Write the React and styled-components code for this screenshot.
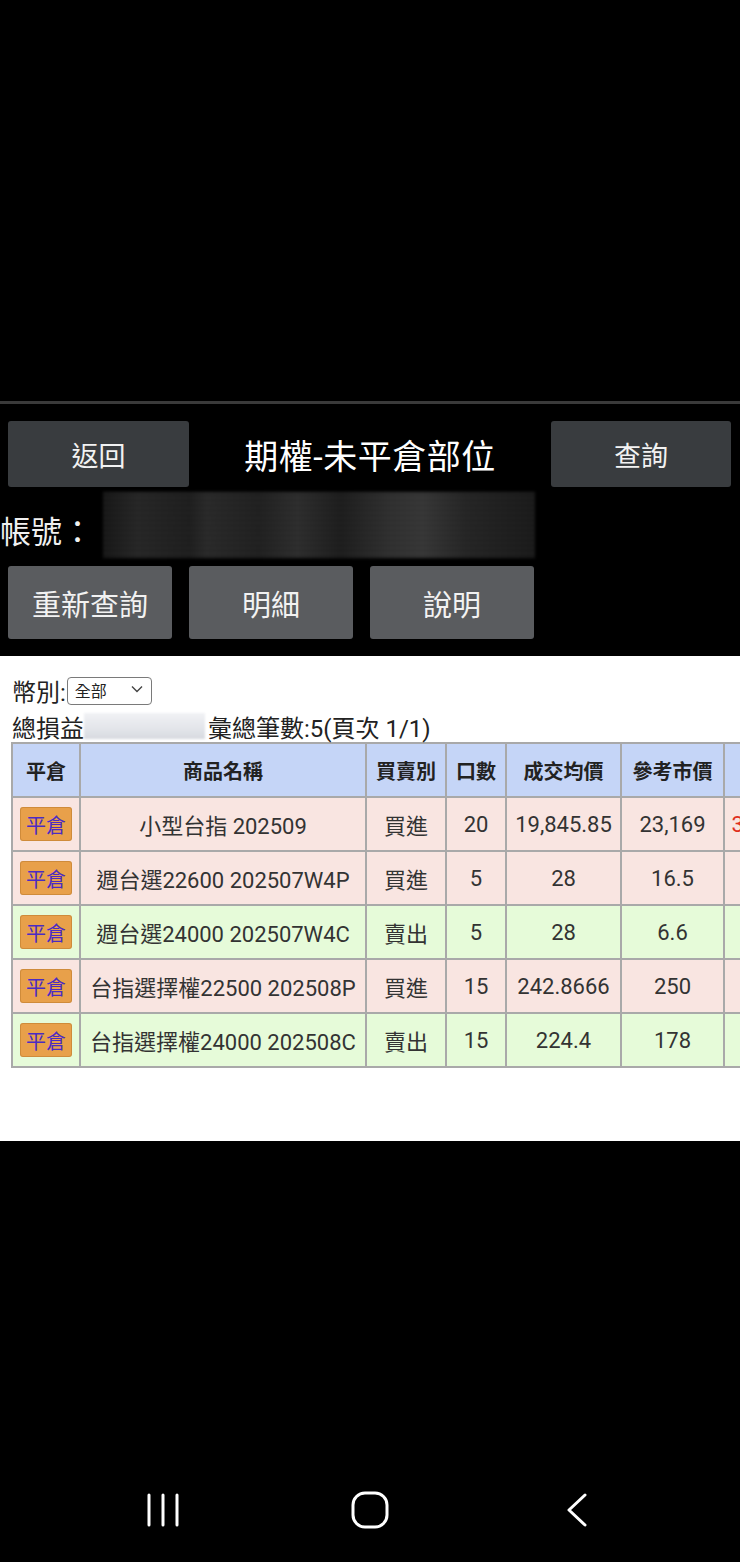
import React from "react";
import styled, { createGlobalStyle } from "styled-components";

const GlobalStyle = createGlobalStyle`
  html, body {
    margin: 0;
    padding: 0;
    background: #000;
    overflow: hidden;
  }
  body {
    font-family: Roboto, "Noto Sans CJK TC", "Noto Sans", sans-serif;
  }
`;

const Screen = styled.div`
  display: flex;
  flex-direction: column;
  width: 740px;
  height: 1562px;
  background: #000;
  overflow: hidden;
`;

const TopSpace = styled.div`
  height: 401px;
  flex-shrink: 0;
`;

const Separator = styled.div`
  height: 3px;
  background: #3a3a3a;
  flex-shrink: 0;
`;

const TitleBar = styled.div`
  display: grid;
  grid-template-columns: 181px 1fr 180px;
  align-items: center;
  margin-top: 17px;
  padding: 0 9px 0 8px;
  height: 66px;
`;

const DarkButton = styled.button`
  height: ${(p) => p.$h || 66}px;
  width: ${(p) => (p.$w ? p.$w + "px" : "100%")};
  border: none;
  border-radius: 3px;
  background: ${(p) => p.$bg || "#393c3f"};
  color: #f2f2f2;
  font-family: inherit;
  font-size: ${(p) => p.$fs || 27}px;
  padding: 0;
  cursor: pointer;
`;

const Title = styled.div`
  text-align: center;
  color: #fff;
  font-size: 34px;
  letter-spacing: 0.5px;
`;

const AccountRow = styled.div`
  display: flex;
  align-items: center;
  height: 79px;
`;

const AccountLabel = styled.span`
  color: #f0f0f0;
  font-size: 31px;
  width: 92px;
  flex-shrink: 0;
  white-space: nowrap;
  margin-top: 6px;
`;

const AccountBlur = styled.div`
  margin-left: 11px;
  width: 432px;
  height: 66px;
  flex-shrink: 0;
  margin-top: -4px;
  background:
    repeating-linear-gradient(180deg, rgba(255,255,255,0.04) 0 2px, rgba(0,0,0,0) 2px 5px),
    linear-gradient(90deg, #141414 0%, #232323 8%, #1b1b1b 20%, #262626 24%, #1d1d1d 36%,
      #2a2a2a 45%, #1a1a1a 55%, #2c2c2c 66%, #333 74%, #222 84%, #171717 100%);
  filter: blur(1.5px);
`;

const ActionRow = styled.div`
  display: flex;
  gap: 17px;
  padding-left: 8px;
  margin-bottom: 17px;
`;

const Panel = styled.div`
  background: #fff;
  height: 485px;
  flex-shrink: 0;
  padding: 20px 0 0 12px;
  box-sizing: border-box;
  overflow: hidden;
  color: #222;
`;

const CurrencyRow = styled.div`
  display: flex;
  align-items: center;
  font-size: 24px;
  height: 28px;
`;

const SelectWrap = styled.div`
  position: relative;
  margin-left: 1px;
`;

const CurrencySelect = styled.select`
  appearance: none;
  width: 85px;
  height: 28px;
  border: 1px solid #7a7a7a;
  border-radius: 4px;
  background: #fff;
  font-family: inherit;
  font-size: 16px;
  padding: 0 0 0 7px;
  color: #222;
`;

const Chevron = styled.svg`
  position: absolute;
  right: 9px;
  top: 10px;
  pointer-events: none;
`;

const SummaryRow = styled.div`
  display: flex;
  align-items: center;
  font-size: 24px;
  height: 28px;
  margin-top: 8px;
`;

const SummaryBlur = styled.div`
  width: 121px;
  height: 26px;
  margin: 0 3px 0 0;
  background: linear-gradient(180deg, #f1f2f5 0%, #e3e5ea 60%, #d7dae0 100%);
  filter: blur(1px);
`;

const Table = styled.table`
  border-collapse: collapse;
  table-layout: fixed;
  width: 822px;
  margin: 2px 0 0 -1px;
  border: 2px solid #a9a9a9;
  font-size: 22px;
`;

const HeadCell = styled.th`
  background: #c5d5f7;
  height: 52px;
  padding: 0;
  font-size: 20px;
  font-weight: 700;
  color: #222;
  border: 2px solid #a9a9a9;
  text-align: center;
`;

const Row = styled.tr`
  background: ${(p) => (p.$sell ? "#e6fbd9" : "#f9e5e1")};
`;

const Cell = styled.td`
  height: 52px;
  padding: 0;
  border: 2px solid #a9a9a9;
  text-align: center;
  color: ${(p) => p.$color || "#333"};
  white-space: nowrap;
  overflow: hidden;
`;

const CloseButton = styled.span`
  display: inline-flex;
  align-items: center;
  justify-content: center;
  width: 52px;
  height: 34px;
  background: #e8a04a;
  color: #4a2bc4;
  font-size: 20px;
  border-radius: 3px;
  box-shadow: inset 0 0 0 1px rgba(160, 100, 30, 0.35);
`;

const Filler = styled.div`
  flex: 1;
`;

const NavBar = styled.div`
  display: flex;
  justify-content: center;
  align-items: center;
  height: 100px;
  padding-bottom: 4px;
  box-sizing: border-box;
`;

const NavSlot = styled.div`
  width: 207px;
  display: flex;
  justify-content: center;
`;

const rows = [
  { name: "小型台指 202509", side: "買進", qty: 20, avg: "19,845.85", ref: "23,169", pl: "3,323,150", up: true },
  { name: "週台選22600 202507W4P", side: "買進", qty: 5, avg: "28", ref: "16.5", pl: "-2,875" },
  { name: "週台選24000 202507W4C", side: "賣出", qty: 5, avg: "28", ref: "6.6", pl: "5,350", sell: true },
  { name: "台指選擇權22500 202508P", side: "買進", qty: 15, avg: "242.8666", ref: "250", pl: "5,350" },
  { name: "台指選擇權24000 202508C", side: "賣出", qty: 15, avg: "224.4", ref: "178", pl: "34,800", sell: true },
];

const widths = [68, 286, 80, 60, 115, 103, 110];
const heads = ["平倉", "商品名稱", "買賣別", "口數", "成交均價", "參考市價", "損益"];

export default function App() {
  return (
    <Screen>
      <GlobalStyle />
      <TopSpace />
      <Separator />
      <TitleBar>
        <DarkButton>返回</DarkButton>
        <Title>期權-未平倉部位</Title>
        <DarkButton>查詢</DarkButton>
      </TitleBar>
      <AccountRow>
        <AccountLabel>帳號：</AccountLabel>
        <AccountBlur />
      </AccountRow>
      <ActionRow>
        <DarkButton $w={164} $h={73} $bg="#5a5c5f" $fs={29}>重新查詢</DarkButton>
        <DarkButton $w={164} $h={73} $bg="#5a5c5f" $fs={29}>明細</DarkButton>
        <DarkButton $w={164} $h={73} $bg="#5a5c5f" $fs={29}>說明</DarkButton>
      </ActionRow>
      <Panel>
        <CurrencyRow>
          幣別:
          <SelectWrap>
            <CurrencySelect defaultValue="all">
              <option value="all">全部</option>
              <option value="twd">台幣</option>
            </CurrencySelect>
            <Chevron width="12" height="8" viewBox="0 0 12 8">
              <path d="M1 1.5 L6 6.5 L11 1.5" fill="none" stroke="#444" strokeWidth="1.4" />
            </Chevron>
          </SelectWrap>
        </CurrencyRow>
        <SummaryRow>
          總損益
          <SummaryBlur />
          彙總筆數:5(頁次 1/1)
        </SummaryRow>
        <Table>
          <colgroup>
            {widths.map((w, i) => (
              <col key={i} style={{ width: w }} />
            ))}
          </colgroup>
          <thead>
            <tr>
              {heads.map((h) => (
                <HeadCell key={h}>{h}</HeadCell>
              ))}
            </tr>
          </thead>
          <tbody>
            {rows.map((r) => (
              <Row key={r.name} $sell={r.sell}>
                <Cell>
                  <CloseButton>平倉</CloseButton>
                </Cell>
                <Cell>{r.name}</Cell>
                <Cell>{r.side}</Cell>
                <Cell>{r.qty}</Cell>
                <Cell>{r.avg}</Cell>
                <Cell>{r.ref}</Cell>
                <Cell $color={r.up ? "#e0301e" : "#333"}>{r.pl}</Cell>
              </Row>
            ))}
          </tbody>
        </Table>
      </Panel>
      <Filler />
      <NavBar>
        <NavSlot>
          <svg width="34" height="36" viewBox="0 0 34 36">
            <g stroke="#fff" strokeWidth="3" strokeLinecap="round">
              <line x1="3" y1="3" x2="3" y2="33" />
              <line x1="17" y1="3" x2="17" y2="33" />
              <line x1="31" y1="3" x2="31" y2="33" />
            </g>
          </svg>
        </NavSlot>
        <NavSlot>
          <svg width="38" height="38" viewBox="0 0 38 38">
            <rect x="2" y="2" width="34" height="34" rx="12" fill="none" stroke="#fff" strokeWidth="3" />
          </svg>
        </NavSlot>
        <NavSlot>
          <svg width="24" height="36" viewBox="0 0 24 36">
            <path d="M20 3 L4 18 L20 33" fill="none" stroke="#fff" strokeWidth="3" strokeLinecap="round" strokeLinejoin="round" />
          </svg>
        </NavSlot>
      </NavBar>
    </Screen>
  );
}
